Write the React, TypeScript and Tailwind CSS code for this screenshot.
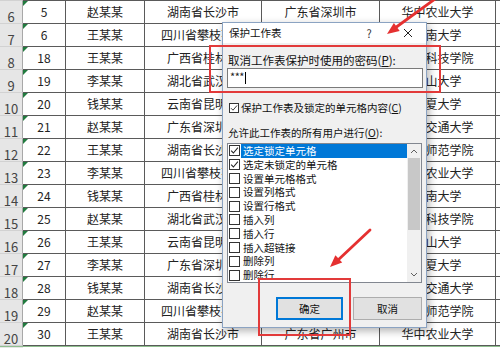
import { Fragment } from "react";

type Row = {
  no: number;
  id: string;
  name: string;
  prov: string;
  city: string;
  uni: string;
};

// row 5 sits above the top edge, only its bottom line shows
const ROWS: Row[] = [
  { no: 5, id: "", name: "", prov: "", city: "", uni: "" },
  { no: 6, id: "5", name: "赵某某", prov: "湖南省长沙市", city: "广东省深圳市", uni: "华中农业大学" },
  { no: 7, id: "6", name: "王某某", prov: "四川省攀枝花市", city: "广东省广州市", uni: "云南大学" },
  { no: 8, id: "18", name: "王某某", prov: "广西省桂林市", city: "湖南省长沙市", uni: "湖南科技学院" },
  { no: 9, id: "19", name: "李某某", prov: "湖北省武汉市", city: "广东省深圳市", uni: "中山大学" },
  { no: 10, id: "20", name: "钱某某", prov: "云南省昆明市", city: "四川省成都市", uni: "宁夏大学" },
  { no: 11, id: "21", name: "赵某某", prov: "广东省深圳市", city: "湖南省长沙市", uni: "西南交通大学" },
  { no: 12, id: "22", name: "王某某", prov: "湖南省长沙市", city: "广东省广州市", uni: "湖南师范学院" },
  { no: 13, id: "23", name: "李某某", prov: "四川省攀枝花市", city: "湖北省武汉市", uni: "华中农业大学" },
  { no: 14, id: "24", name: "钱某某", prov: "广西省桂林市", city: "云南省昆明市", uni: "云南大学" },
  { no: 15, id: "25", name: "赵某某", prov: "湖北省武汉市", city: "广东省深圳市", uni: "湖南科技学院" },
  { no: 16, id: "26", name: "王某某", prov: "云南省昆明市", city: "湖南省长沙市", uni: "中山大学" },
  { no: 17, id: "27", name: "李某某", prov: "广东省深圳市", city: "四川省成都市", uni: "宁夏大学" },
  { no: 18, id: "28", name: "钱某某", prov: "湖南省长沙市", city: "广东省广州市", uni: "西南交通大学" },
  { no: 19, id: "29", name: "赵某某", prov: "四川省攀枝花市", city: "湖北省武汉市", uni: "湖南师范学院" },
  { no: 20, id: "30", name: "王某某", prov: "湖南省长沙市", city: "广东省广州市", uni: "华中农业大学" },
];

const PERMS: { label: string; checked: boolean }[] = [
  { label: "选定锁定单元格", checked: true },
  { label: "选定未锁定的单元格", checked: true },
  { label: "设置单元格格式", checked: false },
  { label: "设置列格式", checked: false },
  { label: "设置行格式", checked: false },
  { label: "插入列", checked: false },
  { label: "插入行", checked: false },
  { label: "插入超链接", checked: false },
  { label: "删除列", checked: false },
  { label: "删除行", checked: false },
];

function Check({ checked, size = 10 }: { checked: boolean; size?: number }) {
  return (
    <span
      className="flex flex-none items-center justify-center border border-[#333] bg-white"
      style={{ width: size, height: size }}
    >
      {checked && (
        <svg width={size - 2} height={size - 2} viewBox="0 0 8 8">
          <polyline points="1,4.2 3,6.2 7,1.5" fill="none" stroke="#222" strokeWidth="0.9" />
        </svg>
      )}
    </span>
  );
}

function Sheet() {
  const cell =
    "flex h-[23px] items-center justify-center overflow-hidden whitespace-nowrap border-b border-r border-[#5a5a5a] text-[12px] text-[#222]";
  return (
    <div className="-mt-[22px] grid grid-cols-[23px_43px_79px_117px_118px_116px_1fr]">
      {ROWS.map((r) => (
        <Fragment key={r.no}>
          <div className="flex h-[23px] items-end justify-center border-b border-r border-b-[#d2d2d2] border-r-[#a8a8a8] bg-[#e6e6e6] text-[13px] leading-[13px] text-[#444]">
            {r.no > 5 ? r.no : ""}
          </div>
          <div className={cell + " relative"}>
            <span className="absolute left-0 top-0 h-0 w-0 border-r-[5px] border-t-[5px] border-r-transparent border-t-[#217a3e]" />
            {r.id}
          </div>
          <div className={cell}>{r.name}</div>
          <div className={cell}>{r.prov}</div>
          <div className={cell}>{r.city}</div>
          <div className={cell}>{r.uni}</div>
          <div className="h-[23px] border-b border-[#5a5a5a] bg-white" />
        </Fragment>
      ))}
      <div className="h-[4px] border-t border-[#8fbf8f] bg-[#e6e6e6]" />
      <div className="col-span-6 h-[4px] border-t border-[#8fbf8f] bg-white" />
    </div>
  );
}

function Dialog() {
  return (
    <div className="absolute left-[222px] top-[22px] flex h-[306px] w-[205px] flex-col border border-[#8ba3c2] bg-[#f0f0f0] text-[#111] shadow-[2px_3px_8px_rgba(0,0,0,0.3)]">
      <div className="flex h-[20px] flex-none items-center bg-white">
        <span className="flex-1 pl-[6px] text-[10.5px]">保护工作表</span>
        <span className="flex w-[40px] justify-center text-[11px] text-[#333]">?</span>
        <span className="flex w-[37px] justify-center">
          <svg width="10" height="10" viewBox="0 0 10 10">
            <path d="M1 1L9 9M9 1L1 9" stroke="#222" strokeWidth="1" />
          </svg>
        </span>
      </div>

      <div className="mt-[10px] whitespace-nowrap pl-[5px] text-[11.5px] leading-[14px]">
        取消工作表保护时使用的密码(<span className="underline">P</span>):
      </div>

      <div className="ml-[4px] mt-[1px] flex h-[20px] w-[196px] flex-none items-center border border-[#7a7a7a] bg-white pl-[2px]">
        <span className="-mt-[4px] text-[11px] leading-[11px] tracking-[-0.5px] text-[#222]">***</span>
        <span className="ml-[1px] h-[12px] w-[1px] bg-black" />
      </div>

      <div className="mt-[13px] flex h-[14px] items-center pl-[6px]">
        <Check checked size={10} />
        <span className="ml-[2px] whitespace-nowrap text-[10.5px]">
          保护工作表及锁定的单元格内容(<span className="underline">C</span>)
        </span>
      </div>

      <div className="mt-[11px] h-[14px] whitespace-nowrap pl-[5px] text-[10.5px] leading-[14px]">
        允许此工作表的所有用户进行(<span className="underline">O</span>):
      </div>

      <div className="ml-[4px] mt-[3px] flex h-[140px] w-[195px] flex-none overflow-hidden border border-[#828790] bg-white">
        <div className="flex flex-1 flex-col">
          {PERMS.map((p, i) => (
            <div key={p.label} className="flex h-[13.8px] flex-none items-center pl-[1px]">
              <Check checked={p.checked} size={11} />
              <span
                className={
                  "ml-[1px] flex h-full flex-1 items-center whitespace-nowrap pl-[2px] text-[10.5px] " +
                  (i === 0 ? "bg-[#0078d7] text-white" : "text-[#111]")
                }
              >
                {p.label}
              </span>
            </div>
          ))}
        </div>
        <div className="flex w-[14px] flex-none flex-col bg-[#f0f0f0]">
          <div className="flex h-[14px] items-center justify-center">
            <svg width="8" height="6" viewBox="0 0 8 6">
              <polyline points="1,5 4,2 7,5" fill="none" stroke="#606060" strokeWidth="1" />
            </svg>
          </div>
          <div className="mx-[1px] h-[72px] bg-[#c8c8c8]" />
          <div className="flex-1" />
          <div className="flex h-[14px] items-center justify-center">
            <svg width="8" height="6" viewBox="0 0 8 6">
              <polyline points="1,1 4,4 7,1" fill="none" stroke="#606060" strokeWidth="1" />
            </svg>
          </div>
        </div>
      </div>

      <div className="mt-[14px] flex h-[23px] flex-none">
        <button className="ml-[53px] flex w-[67px] items-center justify-center border-2 border-[#0078d7] bg-[#e1e1e1] text-[10.5px] text-[#111]">
          确定
        </button>
        <button className="ml-[10px] flex w-[69px] items-center justify-center border border-[#adadad] bg-[#e1e1e1] text-[10.5px] text-[#111]">
          取消
        </button>
      </div>
    </div>
  );
}

function Arrows() {
  return (
    <svg className="pointer-events-none absolute left-0 top-0" width="500" height="348" viewBox="0 0 500 348">
      <line x1="446" y1="-9" x2="395" y2="28" stroke="#e53030" strokeWidth="2.8" strokeLinecap="round" />
      <polygon points="387,34 399.7,31.1 393.9,22.9" fill="#e53030" />
      <line x1="370" y1="230" x2="337" y2="261" stroke="#e53030" strokeWidth="2.8" strokeLinecap="round" />
      <polygon points="330,267 342.2,262.5 335.4,255.2" fill="#e53030" />
    </svg>
  );
}

export default function App() {
  return (
    <div className="relative h-[348px] w-[500px] overflow-hidden bg-white font-['Noto_Sans_CJK_SC','Noto_Sans',sans-serif]">
      <Sheet />
      <Dialog />
      <div className="pointer-events-none absolute left-[209px] top-[45px] h-[48px] w-[232px] border-2 border-[#e23a3a]" />
      <div className="pointer-events-none absolute left-[258px] top-[278px] h-[58px] w-[93px] border-2 border-[#e23a3a]" />
      <Arrows />
    </div>
  );
}
